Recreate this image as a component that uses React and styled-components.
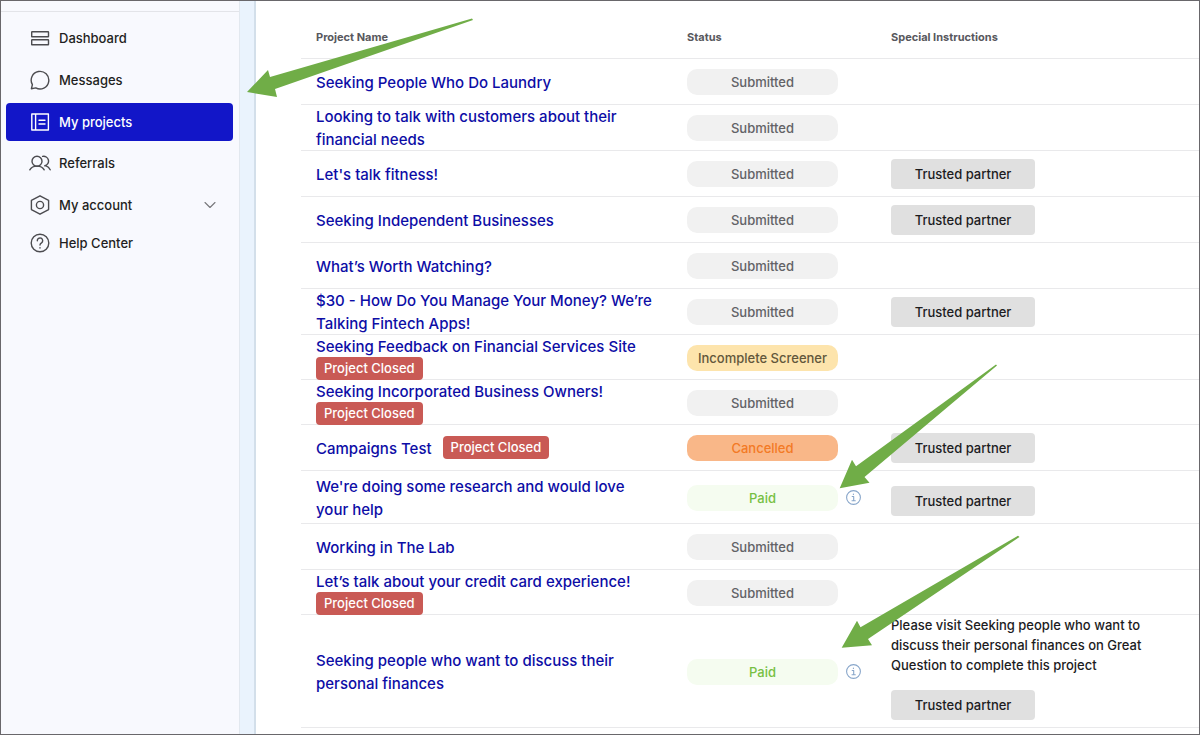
import React from "react";
import styled, { createGlobalStyle, css } from "styled-components";

const GlobalStyle = createGlobalStyle`
  *, *::before, *::after { box-sizing: border-box; }
  body {
    margin: 0;
    background: #fff;
    color: #1c1c1e;
    font-family: Inter, "Liberation Sans", sans-serif;
    font-size: 13px;
    font-weight: 500;
  }
`;

const Page = styled.div`
  position: relative;
  display: flex;
  min-height: 100vh;
  border: 1px solid #69676b;
  overflow: hidden;
`;

const Sidebar = styled.aside`
  flex: none;
  width: 238px;
  background: #f8f9fe;
`;

const SidebarTop = styled.div`
  height: 11px;
  border-bottom: 1px solid #e3e4e9;
`;

const Nav = styled.nav`
  padding: 7px 6px 0 5px;
`;

const NavList = styled.ul`
  display: flex;
  flex-direction: column;
  gap: ${(p) => p.$gap}px;
  margin: 0 0 ${(p) => p.$after}px;
  padding: 0;
  list-style: none;
`;

const NavLink = styled.a`
  display: flex;
  align-items: center;
  gap: 8px;
  height: 38px;
  padding: 0 17px 0 23px;
  border-radius: 4px;
  color: #1f1f22;
  line-height: 20px;
  text-decoration: none;
  ${(p) =>
    p.$active &&
    css`
      background: #1216c8;
      color: #fff;
    `}
`;

const NavText = styled.span`
  flex: 1;
`;

const Icon = styled.svg`
  flex: none;
  display: block;
  fill: none;
  stroke: ${(p) => p.$color || "#4c4c50"};
  stroke-width: ${(p) => p.$weight || 1.4};
  stroke-linecap: round;
  stroke-linejoin: round;
`;

const Gutter = styled.div`
  flex: none;
  width: 17px;
  background: #eaf3fd;
  border-left: 1px solid #e2e8ef;
  border-right: 2px solid #d3dfea;
`;

const Main = styled.main`
  flex: 1;
  min-width: 0;
  padding: 13px 0 4px 45px;
`;

const Table = styled.table`
  width: 100%;
  table-layout: fixed;
  border-collapse: collapse;
`;

const HeadCell = styled.th`
  width: ${(p) => p.$width || "auto"};
  height: 45px;
  padding: 0 0 0 15px;
  box-shadow: inset 0 -1px #e9e9eb;
  color: #58585d;
  font-size: 11px;
  font-weight: 700;
  line-height: 16px;
  text-align: left;
`;

const Row = styled.tr`
  height: ${(p) => (p.$compact ? 45 : 46)}px;
`;

const Cell = styled.td`
  padding: 0 0 0 15px;
  box-shadow: inset 0 -1px #e9e9eb;
  vertical-align: middle;
`;

const NameWrap = styled.div`
  display: flex;
  flex-wrap: wrap;
  align-items: center;
  column-gap: 11px;
  max-width: 342px;
`;

const ProjectLink = styled.a`
  color: #0d0da6;
  font-size: 15px;
  line-height: 23px;
  text-decoration: none;
`;

const ClosedBadge = styled.span`
  height: 23px;
  margin-top: -1px;
  padding: 0 8px;
  border-radius: 4px;
  background: #c95a55;
  color: #fff;
  line-height: 23px;
  white-space: nowrap;
`;

const StatusWrap = styled.div`
  display: flex;
  align-items: center;
  gap: 8px;
`;

const tones = {
  Submitted: ["#f1f1f1", "#626266"],
  "Incomplete Screener": ["#fde4ac", "#62573b"],
  Cancelled: ["#f9b788", "#f37a25"],
  Paid: ["#f5fcf0", "#77c043"],
};

const Pill = styled.span`
  width: 151px;
  height: 26px;
  border-radius: 10px;
  background: ${(p) => tones[p.$tone][0]};
  color: ${(p) => tones[p.$tone][1]};
  line-height: 26px;
  text-align: center;
  white-space: nowrap;
`;

const InfoButton = styled.button`
  padding: 0;
  border: 0;
  background: none;
`;

const Instructions = styled.div`
  padding: 8px 0;
  ${(p) => p.$note && "padding-top: 0;"}
`;

const Note = styled.p`
  width: 270px;
  margin: 0 0 15px;
  line-height: 20px;
`;

const PartnerButton = styled.button`
  display: block;
  width: 144px;
  height: 30px;
  padding: 0;
  border: 0;
  border-radius: 4px;
  background: #e0e0e0;
  color: #1c1c1e;
  font: inherit;
  line-height: 20px;
`;

const ArrowSvg = styled.svg`
  position: absolute;
  left: ${(p) => p.$left}px;
  top: ${(p) => p.$top}px;
  overflow: visible;
  fill: #70ad47;
  pointer-events: none;
`;

const icons = {
  dashboard: (
    <>
      <rect x="1.7" y="3.8" width="16.8" height="5" rx=".4" />
      <rect x="1.7" y="11.8" width="16.8" height="5" rx=".4" />
    </>
  ),
  messages: <path d="M2.4 14.6A8.8 8.8 0 1 1 5.8 17.9L1.4 18.7z" />,
  projects: <path d="M1.8 2h16.6v16H1.8zM5.6 2v16M9 8.2h6M9 12h6" />,
  referrals: (
    <>
      <circle cx="7" cy="8.2" r="5" />
      <path d="M-.2 16.8c1.3-2.3 3.8-3.7 7.2-3.7s5.9 1.4 7.2 3.7M12.6 3.4a4.8 4.8 0 1 1 2.2 9.4M16 12.8c1.8.6 3.2 1.9 4.2 4" />
    </>
  ),
  account: (
    <>
      <path d="M10 .8l8.6 4.6v9.2L10 19.2l-8.6-4.6V5.4z" />
      <circle cx="10" cy="10" r="3.6" />
    </>
  ),
  help: (
    <>
      <circle cx="10" cy="10" r="8.8" />
      <path d="M7.3 7.8A2.7 2.7 0 1 1 11.5 9.9C10.4 10.6 10 11 10 12M10 14.6v.4" />
    </>
  ),
};

const navGroups = [
  {
    gap: 4,
    after: 3,
    items: [
      { icon: "dashboard", text: "Dashboard" },
      { icon: "messages", text: "Messages" },
      { icon: "projects", text: "My projects", active: true },
    ],
  },
  {
    gap: 4,
    after: 0,
    items: [
      { icon: "referrals", text: "Referrals" },
      { icon: "account", text: "My account", expandable: true },
    ],
  },
  { gap: 0, after: 0, items: [{ icon: "help", text: "Help Center" }] },
];

const projects = [
  { name: "Seeking People Who Do Laundry", status: "Submitted" },
  { name: "Looking to talk with customers about their financial needs", status: "Submitted" },
  { name: "Let's talk fitness!", status: "Submitted", partner: true },
  { name: "Seeking Independent Businesses", status: "Submitted", partner: true },
  { name: "What’s Worth Watching?", status: "Submitted" },
  { name: "$30 - How Do You Manage Your Money? We’re Talking Fintech Apps!", status: "Submitted", partner: true },
  { name: "Seeking Feedback on Financial Services Site", status: "Incomplete Screener", closed: true, compact: true },
  { name: "Seeking Incorporated Business Owners!", status: "Submitted", closed: true, compact: true },
  { name: "Campaigns Test", status: "Cancelled", closed: true, partner: true },
  { name: "We're doing some research and would love your help", status: "Paid", partner: true, note: "" },
  { name: "Working in The Lab", status: "Submitted" },
  { name: "Let’s talk about your credit card experience!", status: "Submitted", closed: true, compact: true },
  {
    name: "Seeking people who want to discuss their personal finances",
    status: "Paid",
    partner: true,
    note: "Please visit Seeking people who want to discuss their personal finances on Great Question to complete this project",
  },
];

const arrows = [
  { left: 246, top: 17, width: 226, height: 80, points: "0,74 21,52 23,59 225,0.5 226,2 28,71 30,79" },
  { left: 838, top: 363, width: 158, height: 125, points: "0.7,124.3 13,95.7 17,102.3 157,0.5 158,1.6 25.5,113 30.5,118.7" },
  { left: 840, top: 534, width: 179, height: 113, points: "0.7,112.7 16,85.7 19.5,92.3 177,0.7 178.5,2 27,104 31,110.3" },
];

function InfoIcon() {
  return (
    <Icon width="15" height="15" viewBox="0 0 15 15" $color="#88a6ca" $weight={1.1}>
      <circle cx="7.5" cy="7.5" r="6.9" />
      <path d="M6.2 6.5h1.5v4.3M6 10.8h3.3M7.4 4.1v.3" />
    </Icon>
  );
}

function NavItem({ icon, text, active, expandable }) {
  return (
    <li>
      <NavLink href="#" $active={active} aria-current={active ? "page" : undefined}>
        <Icon width="22" height="20" viewBox="-1 0 22 20" $color={active && "#fff"} aria-hidden="true">
          {icons[icon]}
        </Icon>
        <NavText>{text}</NavText>
        {expandable && (
          <Icon width="12" height="8" viewBox="0 0 12 8" $color="#77777b" $weight={1.1} aria-hidden="true">
            <path d="M1 1.5l5 5 5-5" />
          </Icon>
        )}
      </NavLink>
    </li>
  );
}

function ProjectRow({ name, status, closed, compact, partner, note }) {
  return (
    <Row $compact={compact}>
      <Cell>
        <NameWrap>
          <ProjectLink href="#">{name}</ProjectLink>
          {closed && <ClosedBadge>Project Closed</ClosedBadge>}
        </NameWrap>
      </Cell>
      <Cell>
        <StatusWrap>
          <Pill $tone={status}>{status}</Pill>
          {status === "Paid" && (
            <InfoButton type="button" aria-label="Payment details">
              <InfoIcon />
            </InfoButton>
          )}
        </StatusWrap>
      </Cell>
      <Cell>
        {partner && (
          <Instructions $note={note !== undefined}>
            {note !== undefined && <Note>{note}</Note>}
            <PartnerButton type="button">Trusted partner</PartnerButton>
          </Instructions>
        )}
      </Cell>
    </Row>
  );
}

export default function App() {
  return (
    <>
      <GlobalStyle />
      <Page>
        <Sidebar>
          <SidebarTop />
          <Nav>
            {navGroups.map((group, i) => (
              <NavList key={i} $gap={group.gap} $after={group.after}>
                {group.items.map((item) => (
                  <NavItem key={item.text} {...item} />
                ))}
              </NavList>
            ))}
          </Nav>
        </Sidebar>
        <Gutter />
        <Main>
          <Table>
            <thead>
              <tr>
                <HeadCell $width="371px">Project Name</HeadCell>
                <HeadCell $width="204px">Status</HeadCell>
                <HeadCell>Special Instructions</HeadCell>
              </tr>
            </thead>
            <tbody>
              {projects.map((project) => (
                <ProjectRow key={project.name} {...project} />
              ))}
            </tbody>
          </Table>
        </Main>
        {arrows.map(({ left, top, width, height, points }) => (
          <ArrowSvg key={top} $left={left} $top={top} width={width} height={height} aria-hidden="true">
            <polygon points={points} />
          </ArrowSvg>
        ))}
      </Page>
    </>
  );
}
